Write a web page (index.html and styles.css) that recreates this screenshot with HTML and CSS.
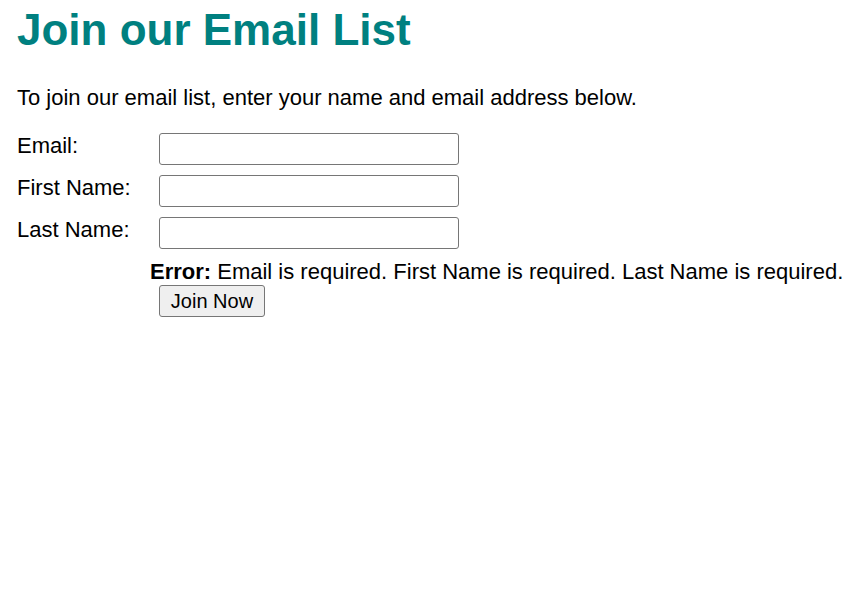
FILE: index.html
```html
<!DOCTYPE html>
<html lang="en">
<head>
<meta charset="utf-8">
<title>Join our Email List</title>
<link rel="stylesheet" href="styles.css">
</head>
<body>
<main class="page">
  <h1 class="title">Join our Email List</h1>
  <p class="intro">To join our email list, enter your name and email address below.</p>
  <form class="signup">
    <div class="field">
      <label class="label" for="email">Email:</label>
      <input class="input" type="email" id="email">
    </div>
    <div class="field">
      <label class="label" for="first">First Name:</label>
      <input class="input" type="text" id="first">
    </div>
    <div class="field">
      <label class="label" for="last">Last Name:</label>
      <input class="input" type="text" id="last">
    </div>
    <div class="actions">
      <div class="error"><strong>Error:</strong> Email is required. First Name is required. Last Name is required.</div>
      <button class="btn" type="button">Join Now</button>
    </div>
  </form>
</main>
</body>
</html>
```

FILE: styles.css
```css
html, body {
  margin: 0;
  padding: 0;
  background: #ffffff;
}
body {
  font-family: "Liberation Sans", Arial, sans-serif;
  font-size: 22px;
  color: #000000;
}
.page {
  padding: 4px 17px 0 17px;
}
.title {
  margin: 0;
  font-size: 44px;
  font-weight: bold;
  color: #008080;
  line-height: 51px;
}
.intro {
  margin: 30px 0 0 0;
  line-height: 25px;
}
.signup {
  margin-top: 23px;
  display: flex;
  flex-direction: column;
  gap: 10px;
}
.field {
  display: flex;
  align-items: flex-start;
}
.label {
  width: 142px;
  flex: none;
  line-height: 25px;
}
.input {
  box-sizing: border-box;
  width: 300px;
  height: 32px;
  margin: 0;
  border: 1px solid #767676;
  border-radius: 3px;
  background: #ffffff;
  font: inherit;
  padding: 2px 4px;
}
.actions {
  margin-left: 133px;
  margin-top: 0;
  line-height: 25px;
}
.error {
  white-space: nowrap;
}
.btn {
  display: block;
  margin: 1px 0 0 9px;
  box-sizing: border-box;
  width: 106px;
  height: 32px;
  padding: 0 6px;
  font: inherit;
  font-size: 20px;
  color: #000000;
  background: #efefef;
  border: 1px solid #767676;
  border-radius: 3px;
}
```
